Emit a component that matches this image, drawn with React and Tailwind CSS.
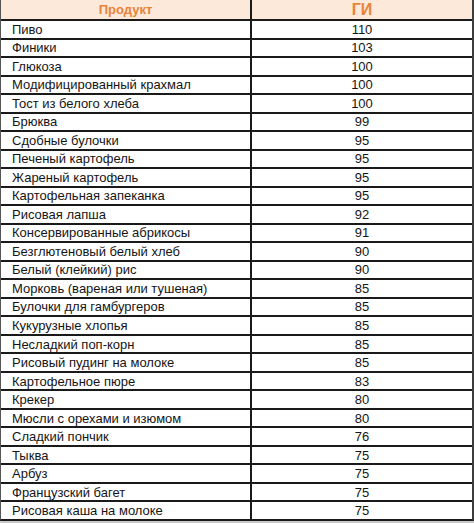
const ROWS = [
  ['Пиво', '110'],
  ['Финики', '103'],
  ['Глюкоза', '100'],
  ['Модифицированный крахмал', '100'],
  ['Тост из белого хлеба', '100'],
  ['Брюква', '99'],
  ['Сдобные булочки', '95'],
  ['Печеный картофель', '95'],
  ['Жареный картофель', '95'],
  ['Картофельная запеканка', '95'],
  ['Рисовая лапша', '92'],
  ['Консервированные абрикосы', '91'],
  ['Безглютеновый белый хлеб', '90'],
  ['Белый (клейкий) рис', '90'],
  ['Морковь (вареная или тушеная)', '85'],
  ['Булочки для гамбургеров', '85'],
  ['Кукурузные хлопья', '85'],
  ['Несладкий поп-корн', '85'],
  ['Рисовый пудинг на молоке', '85'],
  ['Картофельное пюре', '83'],
  ['Крекер', '80'],
  ['Мюсли с орехами и изюмом', '80'],
  ['Сладкий пончик', '76'],
  ['Тыква', '75'],
  ['Арбуз', '75'],
  ['Французский багет', '75'],
  ['Рисовая каша на молоке', '75'],
]

export default function App() {
  return (
    <div className="w-[474px] h-[523px] bg-[#c8c8c8] font-['Liberation_Sans',Arial,sans-serif] overflow-hidden">
      <div className="w-[474px] bg-white border-l border-l-[#555] border-r-2 border-r-[#3d3d3d] border-b-2 border-b-[#1a1a1a]">
        <div className="flex h-[19px] bg-[#fde9da] text-[#e8833a] font-bold">
          <div className="w-[249px] flex items-center justify-center text-[13px]">Продукт</div>
          <div className="flex-1 flex items-center justify-center text-[16px] border-l-2 border-[#1a1a1a]">ГИ</div>
        </div>
        {ROWS.map(([name, gi], i) => (
          <div key={i} className="flex h-[18.52px] border-t-2 border-[#1a1a1a] text-[13px] text-[#151515] leading-none">
            <div className="w-[249px] flex items-center pl-[11px] whitespace-nowrap">{name}</div>
            <div className="flex-1 flex items-center justify-center border-l-2 border-[#1a1a1a]">{gi}</div>
          </div>
        ))}
      </div>
    </div>
  )
}
